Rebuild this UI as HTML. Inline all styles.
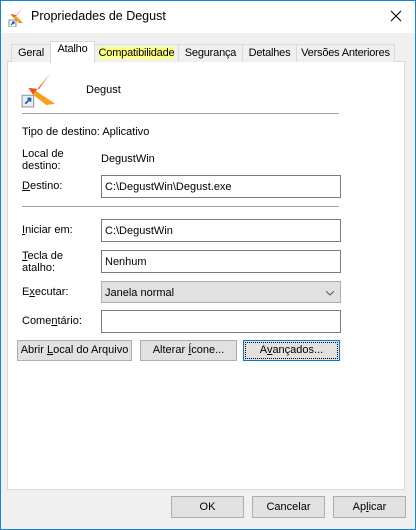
<!DOCTYPE html>
<html><head><style>
*{margin:0;padding:0;box-sizing:border-box}
body{width:416px;height:530px;overflow:hidden;background:#f0f0f0;font-family:"Liberation Sans",sans-serif;font-size:11px;color:#000;position:relative}
.a{position:absolute;white-space:nowrap}
.tb{position:absolute;left:101px;width:240px;background:#fff;border:1px solid #7a7a7a;padding:5px 0 0 3px}
.btn{position:absolute;background:#e1e1e1;border:1px solid #adadad;text-align:center;line-height:19px}
.tab{position:absolute;top:44px;height:18px;border:1px solid #d9d9d9;border-bottom:none;background:#f0f0f0;text-align:center;line-height:16px;font-size:11px;letter-spacing:-0.2px}
u{text-decoration:underline}
</style></head><body>
<div class="a" style="left:0;top:0;width:416px;height:530px;border:1px solid #1883d7"></div>
<div class="a" style="left:1px;top:1px;width:414px;height:32px;background:#fff"></div>
<svg class="a" style="left:7px;top:7px" width="20" height="20" viewBox="0 0 20 20"><path d="M16 1 L9 9 L16 16 L12 16 L6 10 L3 7 L9 8 Z" fill="#f05a1a"/><path d="M9 9 L16 16 L11 15 L6 10Z" fill="#f8a020"/><rect x="2" y="13" width="7" height="7" fill="#fff" stroke="#888" stroke-width="1"/><path d="M4 18 L7 15 M5 15 H7 V17" stroke="#1b5fb0" stroke-width="1.3" fill="none"/></svg>
<div class="a" style="left:31px;top:9px;font-size:12.5px">Propriedades de Degust</div>
<svg class="a" style="left:390px;top:10px" width="12" height="12"><path d="M1 1 L11 11 M11 1 L1 11" stroke="#000" stroke-width="1"/></svg>
<div class="a" style="left:7px;top:61px;width:398px;height:429px;background:#fff;border:1px solid #d9d9d9"></div>
<div class="tab" style="left:11px;width:40px">Geral</div>
<div class="tab" style="left:94px;width:85px;background:#f0f0f0"><span style="background:#ffff80">Compatibilidade</span></div>
<div class="tab" style="left:178px;width:65px">Segurança</div>
<div class="tab" style="left:242px;width:55px">Detalhes</div>
<div class="tab" style="left:296px;width:99px">Versões Anteriores</div>
<div class="tab" style="left:50px;top:41px;width:45px;height:22px;background:#fff;line-height:15px">Atalho</div>
<svg class="a" style="left:21px;top:72px" width="36" height="36" viewBox="0 0 34 34"><path d="M28 1 L14 18 L32 30 L24 31 L11 21 L7 15 L17 16 Z" fill="#f0501a"/><path d="M14 18 L32 30 L24 31 L11 21Z" fill="#f7a020"/><rect x="1" y="22" width="11" height="11" fill="#e8eef6" stroke="#999"/><path d="M4 30 L9 25 M6 25 H9 V28" stroke="#1b5fb0" stroke-width="1.6" fill="none"/></svg>
<div class="a" style="left:86px;top:84px">Degust</div>
<div class="a" style="left:22px;top:113px;width:317px;height:1px;background:#a0a0a0"></div>
<div class="a" style="left:22px;top:126px">Tipo de destino: Aplicativo</div>
<div class="a" style="left:22px;top:148px;line-height:12px">Local de<br>destino:</div>
<div class="a" style="left:101px;top:153px">DegustWin</div>
<div class="a" style="left:22px;top:180px"><u>D</u>estino:</div>
<div class="tb" style="top:175px;height:23px">C:\DegustWin\Degust.exe</div>
<div class="a" style="left:22px;top:206px;width:317px;height:1px;background:#a0a0a0"></div>
<div class="a" style="left:22px;top:224px"><u>I</u>niciar em:</div>
<div class="tb" style="top:219px;height:23px">C:\DegustWin</div>
<div class="a" style="left:22px;top:250px;line-height:12px"><u>T</u>ecla de<br>atalho:</div>
<div class="tb" style="top:250px;height:23px">Nenhum</div>
<div class="a" style="left:22px;top:286px">E<u>x</u>ecutar:</div>
<div class="tb" style="top:281px;height:22px;background:#e1e1e1;border-color:#adadad">Janela normal<svg style="position:absolute;right:6px;top:9px" width="8" height="5"><path d="M0 0 L4 4 L8 0" stroke="#555" fill="none"/></svg></div>
<div class="a" style="left:22px;top:315px">Come<u>n</u>tário:</div>
<div class="tb" style="top:310px;height:23px"></div>
<div class="btn" style="left:17px;top:340px;width:115px;height:21px">Abrir <u>L</u>ocal do Arquivo</div>
<div class="btn" style="left:140px;top:340px;width:97px;height:21px">Alterar <u>Í</u>cone...</div>
<div class="btn" style="left:243px;top:340px;width:97px;height:21px;border:1px solid #0078d7;outline:1px dotted #000;outline-offset:-3px">A<u>v</u>ançados...</div>
<div class="btn" style="left:171px;top:496px;width:73px;height:22px;line-height:20px">OK</div>
<div class="btn" style="left:252px;top:496px;width:73px;height:22px;line-height:20px">Cancelar</div>
<div class="btn" style="left:333px;top:496px;width:73px;height:22px;line-height:20px">Ap<u>l</u>icar</div>
</body></html>
